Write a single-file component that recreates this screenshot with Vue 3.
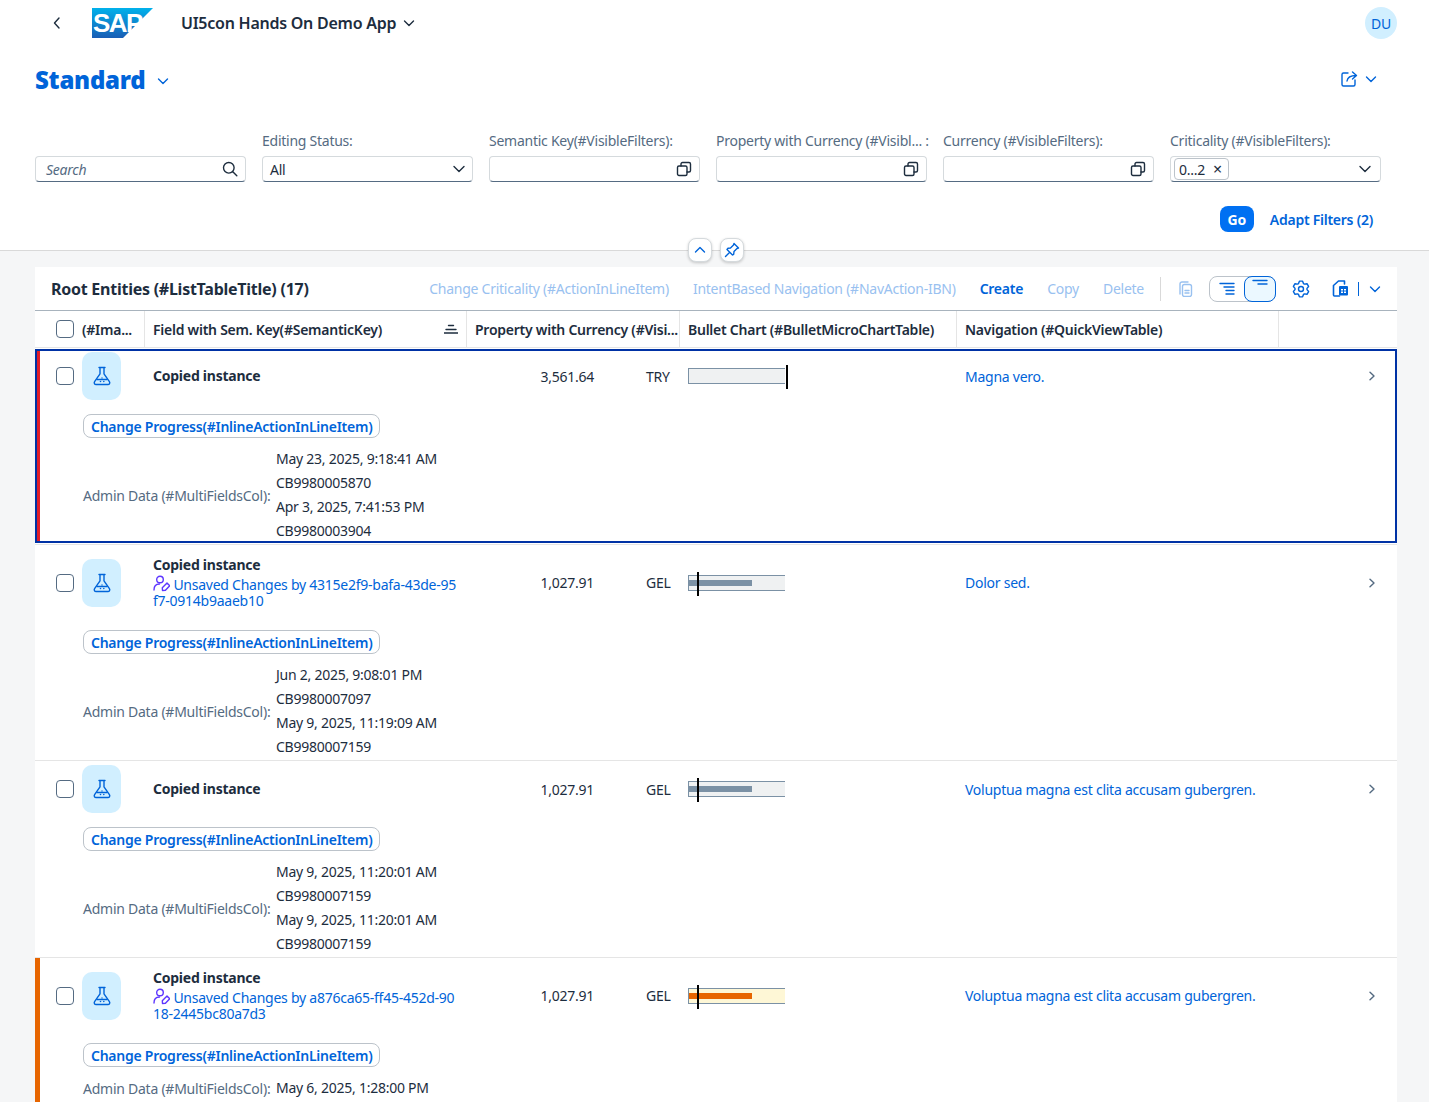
<template>
  <div class="page">
    <header class="object-header">
      <div class="shell">
        <button class="plain back">
          <svg width="16" height="16" viewBox="0 0 16 16"><path d="M10 3 5.5 8l4.5 5" class="stroke dark" /></svg>
        </button>
        <svg class="logo" width="61" height="30" viewBox="0 0 61 30">
          <defs>
            <linearGradient id="sapBlue" x1="0" y1="0" x2="0" y2="1">
              <stop offset="0" stop-color="#00b1eb" />
              <stop offset="1" stop-color="#1a5eb5" />
            </linearGradient>
          </defs>
          <polygon points="0,0 61,0 31,30 0,30" fill="url(#sapBlue)" />
          <text x="1" y="24" class="logo-text">SAP</text>
        </svg>
        <span class="app-title">UI5con Hands On Demo App</span>
        <svg class="app-chevron" width="12" height="12" viewBox="0 0 12 12"><path d="M1.5 4 6 8.5 10.5 4" class="stroke dark" /></svg>
        <span class="avatar">DU</span>
      </div>

      <div class="variant">
        <h1>Standard</h1>
        <svg class="variant-chevron" width="12" height="12" viewBox="0 0 12 12"><path d="M1.5 4 6 8.5 10.5 4" class="stroke blue" /></svg>
        <div class="share">
          <svg width="18" height="18" viewBox="0 0 18 18">
            <path d="M8 3H3.5A1.5 1.5 0 0 0 2 4.5v10A1.5 1.5 0 0 0 3.500 16h10a1.500 1.500 0 0 0 1.500-1.500V10" class="stroke blue" />
            <path d="M7 11c.5-3.500 3-5.500 9-5.500M12.500 2 16.500 5.500 12.500 9" class="stroke blue" />
          </svg>
          <svg width="12" height="12" viewBox="0 0 12 12"><path d="M1.500 4 6 8.500 10.500 4" class="stroke blue" /></svg>
        </div>
      </div>

      <div class="filters">
        <div class="filter">
          <label>&nbsp;</label>
          <div class="input search">
            <span>Search</span>
            <svg width="16" height="16" viewBox="0 0 16 16">
              <circle cx="6.800" cy="6.800" r="5.300" class="stroke dark" />
              <path d="m10.800 10.800 4 4" class="stroke dark" />
            </svg>
          </div>
        </div>
        <div class="filter">
          <label>Editing Status:</label>
          <div class="input">
            <span class="value">All</span>
            <svg width="12" height="12" viewBox="0 0 12 12"><path d="M1 3.500 6 8.500 11 3.500" class="stroke dark" /></svg>
          </div>
        </div>
        <div v-for="label in helpFilters" :key="label" class="filter">
          <label>{{ label }}</label>
          <div class="input">
            <span></span>
            <svg width="16" height="16" viewBox="0 0 16 16">
              <rect x="1.500" y="5" width="9.500" height="9.500" rx="1.500" class="stroke dark" />
              <path d="M5 5V3a1.500 1.500 0 0 1 1.500-1.500h6.500A1.500 1.500 0 0 1 14.500 3v6.500a1.500 1.500 0 0 1-1.500 1.500h-2" class="stroke dark" />
            </svg>
          </div>
        </div>
        <div class="filter">
          <label>Criticality (#VisibleFilters):</label>
          <div class="input token-input">
            <span class="token">0...2 <i>×</i></span>
            <svg width="12" height="12" viewBox="0 0 12 12"><path d="M1 3.500 6 8.500 11 3.500" class="stroke dark" /></svg>
          </div>
        </div>
      </div>

      <div class="filter-actions">
        <button class="go">Go</button>
        <button class="plain adapt">Adapt Filters (2)</button>
      </div>

      <div class="header-toggles">
        <button class="toggle">
          <svg width="12" height="12" viewBox="0 0 12 12"><path d="M1.500 8 6 3.500 10.500 8" class="stroke blue" /></svg>
        </button>
        <button class="toggle">
          <svg width="16" height="16" viewBox="0 0 16 16">
            <path d="M10 1.500 14.500 6l-1.500.5-3 3-.3 2.800-1.200.7L3 7.500l1-1.200 2.500-.3 3-3zM5.500 10.500 1.500 14.500" class="stroke blue" />
          </svg>
        </button>
      </div>
    </header>

    <section class="table-card">
      <div class="toolbar">
        <h2>Root Entities (#ListTableTitle) (17)</h2>
        <div class="actions">
          <span class="act off">Change Criticality (#ActionInLineItem)</span>
          <span class="act off">IntentBased Navigation (#NavAction-IBN)</span>
          <span class="act on">Create</span>
          <span class="act off">Copy</span>
          <span class="act off">Delete</span>
          <span class="divider"></span>
          <svg class="copy-icon" width="16" height="16" viewBox="0 0 16 16">
            <path d="M3 13V3a2 2 0 0 1 2-2h6" class="stroke pale" />
            <rect x="5.500" y="3.500" width="9" height="12" rx="2" class="stroke pale" />
            <path d="M8 9.500h4M8 12h4" class="stroke pale" />
          </svg>
          <div class="segmented">
            <span class="segment">
              <svg width="16" height="16" viewBox="0 0 16 16"><path d="M1 2.500h14M5 6h10M7 9.500h8M7 13h8" class="stroke blue" /></svg>
            </span>
            <span class="segment selected">
              <svg width="16" height="16" viewBox="0 0 16 16"><path d="M1 2.500h14M6 6h9" class="stroke blue" /></svg>
            </span>
          </div>
          <svg class="gear" width="18" height="18" viewBox="0 0 18 18">
            <path :d="gearPath" class="stroke blue" />
            <circle cx="9" cy="9" r="2.500" class="stroke blue" />
          </svg>
          <svg class="export" width="17" height="17" viewBox="0 0 17 17">
            <path d="M6.500 1h6v3M12.500 4M6.500 1 1.500 5.500V15a1 1 0 0 0 1 1h5" class="stroke blue thick" />
            <rect x="7" y="6" width="9" height="9.500" rx="1" fill="#0064d9" />
            <path d="M9 9h2v1.500H9zM12 9h2v1.500h-2zM9 11.500h2V13H9zM12 11.500h2V13h-2z" fill="#fff" />
          </svg>
          <span class="export-sep"></span>
          <svg class="export-chevron" width="12" height="12" viewBox="0 0 12 12"><path d="M1.500 4 6 8.500 10.500 4" class="stroke blue" /></svg>
        </div>
      </div>

      <div class="grid head">
        <div class="cell check-cell"><span class="checkbox"></span></div>
        <div class="cell sep">(#Ima...</div>
        <div class="cell sep key-head">
          <span>Field with Sem. Key(#SemanticKey)</span>
          <svg width="14" height="14" viewBox="0 0 14 14"><path d="M4.500 3.500h5M2 7.500h10M0 11h14" class="stroke dark" /></svg>
        </div>
        <div class="cell sep">Property with Currency (#Visi...</div>
        <div class="cell sep">Bullet Chart (#BulletMicroChartTable)</div>
        <div class="cell sep">Navigation (#QuickViewTable)</div>
        <div class="cell"></div>
      </div>

      <article
        v-for="row in rows"
        :key="row.nav + row.dates[0]"
        class="row"
        :class="[row.state, { focused: row.focused, last: row.last }]"
      >
        <div class="grid main" :class="{ tall: row.draft }">
          <div class="cell check-cell"><span class="checkbox"></span></div>
          <div class="cell">
            <span class="thumb">
              <svg width="20" height="20" viewBox="0 0 20 20">
                <path d="M7 1.500h6M8 1.500v6.300L2.600 15.600c-.9 1.400 0 2.900 1.500 2.900h11.800c1.500 0 2.400-1.500 1.500-2.900L12 7.800V1.500" class="stroke blue" />
                <path d="M5 13.500h10" class="stroke blue" />
                <circle cx="8.500" cy="15.500" r=".8" fill="#0064d9" />
                <circle cx="11.800" cy="15.500" r=".8" fill="#0064d9" />
                <circle cx="10" cy="12" r=".7" fill="#0064d9" />
              </svg>
            </span>
          </div>
          <div class="cell name-cell">
            <strong>Copied instance</strong>
            <a v-if="row.draft" class="draft">
              <svg width="17" height="17" viewBox="0 0 17 17">
                <circle cx="7" cy="4.500" r="3.300" class="stroke violet" />
                <path d="M1 15c0-4 2-6 5.500-6M9.500 15.500l-.2-2.800L14 8l2.700 2.700-4.500 4.700z" class="stroke violet" />
              </svg>
              Unsaved Changes by {{ row.draft }}
            </a>
          </div>
          <div class="cell price-cell">
            <span class="amount">{{ row.amount }}</span>
            <span class="currency">{{ row.currency }}</span>
          </div>
          <div class="cell">
            <div class="bullet" :class="row.state">
              <span v-if="row.bar" class="bar"></span>
              <span class="target" :style="{ left: row.target + 'px' }"></span>
            </div>
          </div>
          <div class="cell"><a class="link">{{ row.nav }}</a></div>
          <div class="cell nav-arrow">
            <svg width="10" height="10" viewBox="0 0 10 10"><path d="M3 1.200 7 5 3 8.800" class="stroke slate" /></svg>
          </div>
        </div>
        <div class="details">
          <button class="inline-action">Change Progress(#InlineActionInLineItem)</button>
          <div class="admin">
            <span class="admin-label">Admin Data (#MultiFieldsCol):</span>
            <div class="admin-values">
              <div v-for="d in row.dates" :key="d">{{ d }}</div>
            </div>
          </div>
        </div>
      </article>
    </section>
  </div>
</template>

<script setup>
const helpFilters = [
  'Semantic Key(#VisibleFilters):',
  'Property with Currency (#Visibl... :',
  'Currency (#VisibleFilters):'
]

const rows = [
  {
    state: 'neutral', focused: true, amount: '3,561.64', currency: 'TRY', bar: false, target: 97,
    nav: 'Magna vero.',
    dates: ['May 23, 2025, 9:18:41 AM', 'CB9980005870', 'Apr 3, 2025, 7:41:53 PM', 'CB9980003904']
  },
  {
    state: 'neutral', draft: '4315e2f9-bafa-43de-95f7-0914b9aaeb10', amount: '1,027.91', currency: 'GEL', bar: true, target: 8,
    nav: 'Dolor sed.',
    dates: ['Jun 2, 2025, 9:08:01 PM', 'CB9980007097', 'May 9, 2025, 11:19:09 AM', 'CB9980007159']
  },
  {
    state: 'neutral', amount: '1,027.91', currency: 'GEL', bar: true, target: 8,
    nav: 'Voluptua magna est clita accusam gubergren.',
    dates: ['May 9, 2025, 11:20:01 AM', 'CB9980007159', 'May 9, 2025, 11:20:01 AM', 'CB9980007159']
  },
  {
    state: 'critical', last: true, draft: 'a876ca65-ff45-452d-9018-2445bc80a7d3', amount: '1,027.91', currency: 'GEL', bar: true, target: 8,
    nav: 'Voluptua magna est clita accusam gubergren.',
    dates: ['May 6, 2025, 1:28:00 PM']
  }
]

// six toothed gear outline for the settings icon
const gearPath = (() => {
  const pts = []
  for (let i = 0; i < 6; i++) {
    const a = (i * Math.PI) / 3
    for (const [r, d] of [[6, -0.42], [8, -0.2], [8, 0.2], [6, 0.42]]) {
      pts.push((9 + r * Math.sin(a + d)).toFixed(2) + ' ' + (9 - r * Math.cos(a + d)).toFixed(2))
    }
  }
  return 'M' + pts.join('L') + 'Z'
})()
</script>

<style>
html,
body {
  margin: 0;
  background: #f5f6f7;
}
</style>

<style scoped>
.page {
  height: 1102px;
  overflow: hidden;
  display: flex;
  flex-direction: column;
  font-family: "Noto Sans", "Liberation Sans", sans-serif;
  font-size: 14px;
  color: #1d2d3e;
  letter-spacing: -0.25px;
}

button {
  font: inherit;
  letter-spacing: inherit;
  cursor: pointer;
}

.stroke {
  fill: none;
  stroke-width: 1.4;
  stroke-linecap: round;
  stroke-linejoin: round;
}
.dark { stroke: #1d2d3e; }
.blue { stroke: #0064d9; }
.pale { stroke: #99c1f0; }
.slate { stroke: #556b82; }
.violet { stroke: #5d36ff; }
.thick { stroke-width: 1.6; }

.plain {
  background: none;
  border: 0;
  padding: 0;
}

.object-header {
  position: relative;
  height: 250px;
  flex: none;
  background: #fff;
  border-bottom: 1px solid #d9d9d9;
  box-sizing: content-box;
}

.shell {
  display: flex;
  align-items: center;
  height: 46px;
  padding: 0 32px 0 49px;
}

.back {
  display: flex;
  width: 16px;
  margin-right: 27px;
}

.logo { margin-right: 28px; }

.logo-text {
  font-family: "Liberation Sans", sans-serif;
  font-size: 26px;
  font-weight: 700;
  fill: #fff;
  letter-spacing: -1.5px;
}

.app-title {
  font-size: 16px;
  font-weight: 600;
}

.app-chevron { margin-left: 7px; }

.avatar {
  margin-left: auto;
  width: 32px;
  height: 32px;
  border-radius: 50%;
  background: #d1efff;
  color: #0064d9;
  display: flex;
  align-items: center;
  justify-content: center;
}

.variant {
  display: flex;
  align-items: center;
  height: 38px;
  margin-top: 14px;
  padding: 0 52px 0 35px;
}

.variant h1 {
  margin: 0;
  font-size: 24px;
  font-weight: 900;
  color: #0064d9;
}

.variant-chevron { margin-left: 11px; margin-top: 3px; }

.share {
  margin-left: auto;
  display: flex;
  align-items: center;
  gap: 7px;
}

.filters {
  display: grid;
  grid-template-columns: repeat(6, 211px);
  gap: 16px;
  margin-top: 34px;
  padding-left: 35px;
}

.filter label {
  display: block;
  height: 18px;
  line-height: 18px;
  margin-bottom: 6px;
  color: #556b82;
  white-space: nowrap;
}

.input {
  height: 26px;
  box-sizing: border-box;
  display: flex;
  align-items: center;
  justify-content: space-between;
  background: #fff;
  border: 1px solid #d5dadd;
  border-bottom-color: #556b82;
  border-radius: 4px;
  padding: 0 7px 0 7px;
}

.search span {
  padding-left: 3px;
  font-style: italic;
  color: #556b82;
}

.token-input { padding-left: 3px; padding-right: 9px; }

.token {
  display: flex;
  align-items: center;
  gap: 8px;
  height: 20px;
  padding: 0 6px 0 4px;
  border: 1px solid #bcc3ca;
  border-radius: 4px;
}

.token i {
  font-style: normal;
  font-size: 16px;
  line-height: 1;
}

.filter-actions {
  display: flex;
  justify-content: flex-end;
  align-items: center;
  gap: 16px;
  margin-top: 24px;
  padding-right: 56px;
}

.go {
  width: 34px;
  height: 26px;
  border: 0;
  border-radius: 8px;
  background: #0070f2;
  color: #fff;
  font-weight: 700;
}

.adapt {
  color: #0064d9;
  font-weight: 600;
}

.header-toggles {
  position: absolute;
  left: 688px;
  top: 238px;
  display: flex;
  gap: 8px;
}

.toggle {
  width: 24px;
  height: 24px;
  padding: 0;
  display: flex;
  align-items: center;
  justify-content: center;
  background: #fff;
  border: 1px solid #d5dadd;
  border-radius: 8px;
  box-shadow: 0 1px 3px rgba(0, 0, 0, 0.2);
}

.table-card {
  flex: 1;
  min-height: 0;
  display: flex;
  flex-direction: column;
  margin: 16px 32px 0 35px;
  background: #fff;
}

.toolbar {
  flex: none;
  height: 43px;
  display: flex;
  align-items: center;
  justify-content: space-between;
  padding: 0 16px;
  border-bottom: 1px solid #a8b3bd;
  box-sizing: content-box;
}

.toolbar h2 {
  margin: 0;
  font-size: 16px;
  font-weight: 700;
}

.actions {
  display: flex;
  align-items: center;
  gap: 24px;
}

.act { white-space: nowrap; }
.act.off { color: #99c1f0; }
.act.on { color: #0064d9; font-weight: 600; }

.divider {
  width: 1px;
  height: 24px;
  margin-left: -8px;
  background: #d9d9d9;
}

.copy-icon { margin-left: -8px; }

.segmented {
  display: flex;
  height: 26px;
  margin-left: -8px;
  border: 1px solid #bcc3ca;
  border-radius: 8px;
  box-sizing: border-box;
}

.segment {
  width: 34px;
  display: flex;
  align-items: center;
  justify-content: center;
}

.segment.selected {
  width: 32px;
  margin: -1px -1px -1px 0;
  background: #ebf8ff;
  border: 1px solid #0064d9;
  border-radius: 8px;
  box-sizing: border-box;
  align-items: flex-start;
  padding-top: 1px;
}

.gear { margin-left: -8px; }
.export { margin-left: -2px; }

.export-sep {
  width: 1px;
  height: 14px;
  margin-left: -15px;
  background: #0064d9;
}

.export-chevron { margin-left: -14px; }

.grid {
  display: grid;
  grid-template-columns: 39px 71px 322px 213px 277px 322px 118px;
}

.head {
  flex: none;
  height: 36px;
  border-bottom: 1px solid #e5e5e5;
  font-weight: 600;
  white-space: nowrap;
}

.head .cell {
  display: flex;
  align-items: center;
  padding: 0 8px;
  overflow: hidden;
}

.head .sep {
  border-right: 1px solid #e5e5e5;
}

.head .cell:nth-child(2) { padding-left: 8px; }

.key-head { justify-content: space-between; }

.check-cell {
  display: flex;
  align-items: center;
  justify-content: flex-end;
  padding: 0 !important;
}

.checkbox {
  width: 16px;
  height: 16px;
  border: 1px solid #556b82;
  border-radius: 4px;
  background: #fff;
  display: block;
}

.row {
  position: relative;
  flex: none;
  height: 197px;
  box-sizing: border-box;
  border-bottom: 1px solid #e5e5e5;
}

.row.last {
  flex: 1;
  border-bottom: 0;
}

.row.critical::before {
  content: "";
  position: absolute;
  left: 0;
  top: 0;
  bottom: 0;
  width: 5px;
  background: #e76500;
}

.row.focused::before {
  content: "";
  position: absolute;
  left: 2px;
  top: 1px;
  bottom: 1px;
  width: 3px;
  background: #e11d2a;
}

.row.focused::after {
  content: "";
  position: absolute;
  inset: 1px 0 1px 0;
  border: 2px solid #0032a5;
  pointer-events: none;
}

.main {
  height: 56px;
  align-items: center;
}

.main.tall { height: 75px; }

.main .cell {
  padding: 0 8px;
  min-width: 0;
}

.row:has(.tall) { height: 216px; }
.row.last:has(.tall) { height: auto; }

.thumb {
  width: 39px;
  height: 48px;
  margin-left: 0;
  border-radius: 10px;
  background: #d1efff;
  display: flex;
  align-items: center;
  justify-content: center;
}

.main .cell:nth-child(2) { padding-left: 8px; padding-right: 0; }

.name-cell strong {
  display: block;
  font-weight: 700;
  line-height: 16px;
}

.draft {
  display: block;
  color: #0064d9;
  line-height: 16px;
  margin-top: 2px;
  width: 306px;
  word-break: break-all;
}

.draft svg {
  vertical-align: -2px;
}

.price-cell {
  display: flex;
  align-items: center;
  padding: 0 8px;
}

.amount {
  width: 119px;
  text-align: right;
}

.currency {
  margin-left: 52px;
}

.bullet {
  position: relative;
  width: 97px;
  height: 16px;
  box-sizing: border-box;
  background: #eff1f2;
  border: 1px solid #7b91a5;
  border-right: 0;
}

.bullet.critical { background: #fef7d6; }

.bar {
  position: absolute;
  left: 0;
  top: 4px;
  width: 63px;
  height: 6px;
  background: #7b91a5;
}

.bullet.critical .bar { background: #e76500; }

.target {
  position: absolute;
  top: -4px;
  width: 2px;
  height: 24px;
  background: #000;
}

.link { color: #0064d9; }

.nav-arrow { display: flex; justify-content: flex-end; padding-right: 20px !important; }

.details {
  padding: 10px 0 0 48px;
}

.inline-action {
  display: block;
  height: 24px;
  padding: 0 7px;
  background: #fff;
  border: 1px solid #bcc3ca;
  border-radius: 8px;
  color: #0064d9;
  font-weight: 600;
  white-space: nowrap;
}

.admin {
  display: flex;
  align-items: center;
  margin-top: 9px;
}

.admin-label {
  width: 193px;
  color: #556b82;
  white-space: nowrap;
}

.admin-values div {
  line-height: 24px;
}
</style>
